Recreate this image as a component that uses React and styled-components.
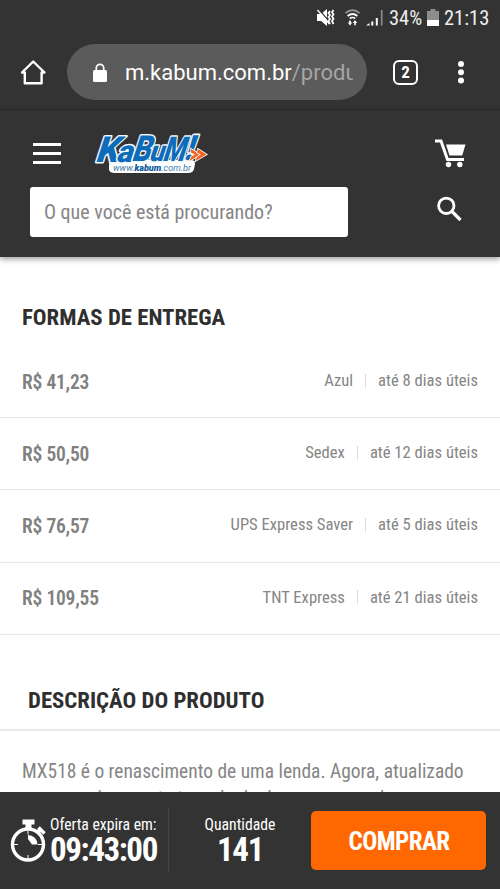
import React from 'react'
import styled, { createGlobalStyle } from 'styled-components'

const condensed = "'Roboto Condensed', Roboto, sans-serif"

const GlobalStyle = createGlobalStyle`
  * {
    box-sizing: border-box;
  }
  body {
    margin: 0;
    background: #fff;
    font-family: ${condensed};
    overflow: hidden;
  }
  svg {
    flex: none;
  }
`

const Screen = styled.div`
  display: flex;
  flex-direction: column;
  width: 500px;
  height: 889px;
  overflow: hidden;
`

const StatusBar = styled.div`
  display: flex;
  justify-content: flex-end;
  align-items: center;
  height: 35px;
  padding-right: 10px;
  background: #333;
  color: #eee;
  font-size: 20.5px;
  flex: none;
`

const StatusText = styled.span`
  margin-left: ${p => p.gap}px;
  width: ${p => p.width}px;
  white-space: nowrap;
`

const Battery = styled.svg`
  margin-left: 5px;
`

const BrowserBar = styled.div`
  display: flex;
  align-items: center;
  height: 75px;
  padding: 0 27px 0 19px;
  background: #333;
  border-bottom: 1px solid #2c2c2c;
  flex: none;
`

const AddressPill = styled.div`
  display: flex;
  align-items: center;
  width: 300px;
  height: 56px;
  margin: 0 26px 0 20px;
  padding: 1px 14px 0 25px;
  border-radius: 28px;
  background: #5b5b5b;
`

const Address = styled.div`
  width: 228px;
  margin-left: 17px;
  overflow: hidden;
  white-space: nowrap;
  color: #fff;
  font-family: Roboto, sans-serif;
  font-size: 22px;
  line-height: 30px;
`

const AddressPath = styled.span`
  color: #a5a5a5;
`

const TabCount = styled.div`
  display: flex;
  align-items: center;
  justify-content: center;
  width: 25px;
  height: 25px;
  margin-right: 39px;
  border: 2.5px solid #fff;
  border-radius: 6px;
  color: #fff;
  font-size: 17px;
  font-weight: 700;
  line-height: 20px;
`

const SiteHeader = styled.header`
  height: 147px;
  padding: 20px 34px 0 30px;
  background: #333;
  box-shadow: 0 2px 6px rgba(0, 0, 0, 0.4);
  flex: none;
`

const HeaderRow = styled.div`
  display: flex;
  align-items: center;
  justify-content: space-between;
  height: ${p => p.height}px;
`

const Brand = styled.div`
  display: flex;
  align-items: center;
  gap: 29px;
  padding-left: 3px;
`

const MenuButton = styled.div`
  display: flex;
  flex-direction: column;
  justify-content: space-between;
  width: 28px;
  height: 21px;
`

const MenuLine = styled.span`
  height: 3px;
  background: #fff;
`

const SearchField = styled.div`
  width: 318px;
  height: 50px;
  padding-left: 14px;
  border-radius: 3px;
  background: #fff;
  color: #858585;
  font-size: 20px;
  line-height: 50px;
`

const SearchButton = styled.div`
  display: flex;
  padding: 0 4px 7px 0;
`

const Content = styled.main`
  flex: 1;
  overflow: hidden;
  padding-top: 45px;
`

const Title = styled.h2`
  margin: 0;
  padding-left: ${p => p.indent}px;
  color: #2f2f2f;
  font-size: 22.8px;
  font-weight: 700;
  line-height: 32px;
`

const ShippingList = styled.ul`
  margin: 12px 0 0;
  padding: 0;
  list-style: none;
`

const ShippingItem = styled.li`
  display: flex;
  align-items: center;
  justify-content: space-between;
  height: 72.2px;
  padding: 0 22px;
  border-bottom: 1.5px solid #e8e8e8;
`

const Price = styled.span`
  padding-top: 1px;
  color: #808080;
  font-size: 19.5px;
  font-weight: 600;
  letter-spacing: -0.2px;
`

const Delivery = styled.span`
  display: flex;
  align-items: center;
  padding-bottom: 2px;
  color: #858585;
  font-size: 16.6px;
`

const Separator = styled.span`
  width: 1px;
  height: 14px;
  margin: 0 12px;
  background: #ddd;
`

const DescriptionHead = styled.div`
  margin-top: 50px;
  padding-bottom: 12px;
  border-bottom: 2px solid #e8e8e8;
`

const Description = styled.p`
  margin: 27px 0 0;
  padding: 0 22px;
  color: #858585;
  font-size: 19.45px;
  line-height: 27px;
  white-space: nowrap;
`

const BuyBar = styled.footer`
  display: flex;
  align-items: center;
  height: 97px;
  padding: 0 14px 0 10px;
  background: #333;
  color: #fff;
  flex: none;
`

const Info = styled.div`
  display: flex;
  flex-direction: column;
  align-items: ${p => (p.center ? 'center' : 'flex-start')};
  width: ${p => p.width}px;
  margin-left: ${p => p.gap || 0}px;
  padding-bottom: 3px;
`

const InfoLabel = styled.span`
  font-size: 15.7px;
  line-height: 20px;
  white-space: nowrap;
`

const InfoValue = styled.span`
  font-size: 33px;
  font-weight: 700;
  letter-spacing: -1.4px;
  line-height: 29px;
`

const Divider = styled.div`
  width: 1px;
  height: 65px;
  background: #474747;
`

const BuyButton = styled.button`
  width: 175px;
  height: 59px;
  margin-left: auto;
  padding: 1px 0 0 1px;
  border: 0;
  border-radius: 5px;
  background: #ff6700;
  color: #fff;
  font-family: ${condensed};
  font-size: 25px;
  font-weight: 700;
  letter-spacing: -0.6px;
`

const shipping = [
  { price: 'R$ 41,23', carrier: 'Azul', time: 'até 8 dias úteis' },
  { price: 'R$ 50,50', carrier: 'Sedex', time: 'até 12 dias úteis' },
  { price: 'R$ 76,57', carrier: 'UPS Express Saver', time: 'até 5 dias úteis' },
  { price: 'R$ 109,55', carrier: 'TNT Express', time: 'até 21 dias úteis' },
]

const StatusIcons = () => (
  <svg width="68" height="20" viewBox="316 8 68 20" fill="#fff">
    <path d="M317 14h4l6-5v17l-6-5h-4z" />
    <path d="M318.500 9l12 14" stroke="#333" strokeWidth="1.200" />
    <path d="M317.500 10l12 14" stroke="#fff" strokeWidth="1.400" />
    <path
      d="M330 11l-1.500 2 1.500 2-1.500 2 1.500 2-1.500 2 1.500 3M333.500 10l-1.500 2.200 1.500 2.200-1.500 2.200 1.500 2.200-1.500 2.200 1.500 3"
      fill="none"
      stroke="#fff"
      strokeWidth="1.800"
    />
    <g fill="none" strokeWidth="1.700">
      <path d="M345.500 13.200q7-6 14 0" stroke="#999" />
      <path d="M347.600 16q4.900-4 9.800 0M349.800 18.500q2.700-2 5.400 0" stroke="#fff" />
    </g>
    <path d="M350 25.500l-2.200-3h1.400v-2h1.600v2h1.400zM355 20l2.200 3h-1.400v2.300h-1.600V23h-1.400z" />
    <path d="M366 25.500l3.500-2.500v2.500zM371.300 21.500h2v4h-2zM375.800 18h2v7.500h-2z" />
    <path d="M380.800 10h1.800v15.500h-1.800z" fill="#888" />
  </svg>
)

const BatteryIcon = () => (
  <Battery width="12" height="17" viewBox="0 0 12 17">
    <path d="M3.500 0h5v2H12v9H0V2h3.500z" fill="#8c8c8c" />
    <path d="M0 11h12v6H0z" fill="#fff" />
  </Battery>
)

const HomeIcon = () => (
  <svg width="28" height="28" viewBox="0 0 28 28" fill="none">
    <path
      d="M3 14.500L14.200 3.500l11.300 11H22.600V25.200H5.800V14.500z"
      stroke="#fff"
      strokeWidth="2.400"
      strokeLinejoin="round"
    />
  </svg>
)

const LockIcon = () => (
  <svg width="16" height="20" viewBox="0 0 16 20">
    <rect x="1" y="7" width="14" height="12" rx="1.500" fill="#fff" />
    <path d="M4.300 8V5a3.700 3.700 0 0 1 7.400 0v3" fill="none" stroke="#fff" strokeWidth="1.700" />
  </svg>
)

const MoreIcon = () => (
  <svg width="8" height="24" viewBox="0 0 8 24" fill="#fff">
    <circle cx="4" cy="4" r="3" />
    <circle cx="4" cy="12.300" r="3" />
    <circle cx="4" cy="20.600" r="3" />
  </svg>
)

const LogoSvg = styled.svg`
  overflow: visible;
  font-family: Roboto, sans-serif;
`

const Logo = () => (
  <LogoSvg width="118" height="44" viewBox="92 131 118 44">
    <path d="M117 160h76q4 0 4 4l-1 5q-1 4-6 4h-73q-6 0-6-4v-4q0-5 6-5z" fill="#fff" />
    <g
      transform="translate(96.500 161.500) skewX(-18)"
      fontWeight="900"
      fill="#0c6cb9"
      stroke="#f2f8fc"
      strokeWidth="3"
      strokeLinejoin="round"
      paintOrder="stroke"
    >
      <text x="0" y="0" fontSize="36" textLength="23" lengthAdjust="spacingAndGlyphs">K</text>
      <text x="21" y="0" fontSize="31" textLength="16" lengthAdjust="spacingAndGlyphs">a</text>
      <text x="36" y="-1" fontSize="36" textLength="19" lengthAdjust="spacingAndGlyphs">B</text>
      <text x="53.500" y="-1" fontSize="29" textLength="15" lengthAdjust="spacingAndGlyphs">u</text>
      <text x="67" y="-1" fontSize="34" textLength="22" lengthAdjust="spacingAndGlyphs">M</text>
      <text x="88" y="-2" fontSize="35" textLength="9" lengthAdjust="spacingAndGlyphs">!</text>
    </g>
    <g fill="#f4601f" stroke="#fff" strokeWidth="1.600" paintOrder="stroke">
      <path d="M193 149l9 5.500-10.500 6.500 1.500-4 4-2.500-4-2z" />
      <path d="M200 149l8.500 5.500-11 6.500 1.500-4 4-2.500-4-2z" />
    </g>
    <text
      x="115"
      y="170.500"
      fontSize="9.500"
      fontStyle="italic"
      textLength="78"
      lengthAdjust="spacingAndGlyphs"
      fill="#4179a8"
    >
      www.<tspan fontWeight="900" fill="#0b5a9c">kabum</tspan>.com.br
    </text>
  </LogoSvg>
)

const CartIcon = () => (
  <svg width="31" height="29" viewBox="0 0 31 29">
    <path d="M0 2h6l6.500 18.500h16.500" fill="none" stroke="#fff" strokeWidth="3" />
    <path d="M11 5.500h19.500l-3.300 11H14.500z" fill="#fff" />
    <circle cx="13.500" cy="25.500" r="2.700" fill="#fff" />
    <circle cx="24.800" cy="25.500" r="2.700" fill="#fff" />
  </svg>
)

const SearchIcon = () => (
  <svg width="25" height="26" viewBox="0 0 25 26" fill="none" stroke="#fff">
    <circle cx="9.300" cy="9.800" r="7.700" strokeWidth="2.800" />
    <path d="M15 15.500l8.500 8.500" strokeWidth="3.200" />
  </svg>
)

const StopwatchIcon = () => (
  <svg width="36" height="43" viewBox="0 0 36 43" fill="none" stroke="#fff">
    <circle cx="18" cy="25.500" r="15.500" strokeWidth="3.400" />
    <path d="M12.500 3h12" strokeWidth="5" />
    <path d="M18.500 5v5" strokeWidth="6" />
    <path d="M27.500 13.500l4-4" strokeWidth="4" />
    <path d="M28.500 8.500l6 6" strokeWidth="3.500" />
    <path d="M18 12v3.500M18 36v3.500M4 25.500h4M28 25.500h4" strokeWidth="1" />
    <path d="M18 16a9.500 9.500 0 0 1 9.500 9.500h-5.500L18 20z" fill="#fff" stroke="none" />
  </svg>
)

export default function App() {
  return (
    <Screen>
      <GlobalStyle />
      <StatusBar>
        <StatusIcons />
        <StatusText gap={5} width={33}>34%</StatusText>
        <BatteryIcon />
        <StatusText gap={5} width={46}>21:13</StatusText>
      </StatusBar>
      <BrowserBar>
        <HomeIcon />
        <AddressPill>
          <LockIcon />
          <Address>
            m.kabum.com.br<AddressPath>/produ</AddressPath>
          </Address>
        </AddressPill>
        <TabCount>2</TabCount>
        <MoreIcon />
      </BrowserBar>
      <SiteHeader>
        <HeaderRow height={46}>
          <Brand>
            <MenuButton>
              <MenuLine />
              <MenuLine />
              <MenuLine />
            </MenuButton>
            <Logo />
          </Brand>
          <CartIcon />
        </HeaderRow>
        <HeaderRow height={72}>
          <SearchField>O que você está procurando?</SearchField>
          <SearchButton>
            <SearchIcon />
          </SearchButton>
        </HeaderRow>
      </SiteHeader>
      <Content>
        <Title indent={22}>FORMAS DE ENTREGA</Title>
        <ShippingList>
          {shipping.map(item => (
            <ShippingItem key={item.carrier}>
              <Price>{item.price}</Price>
              <Delivery>
                {item.carrier}
                <Separator />
                {item.time}
              </Delivery>
            </ShippingItem>
          ))}
        </ShippingList>
        <DescriptionHead>
          <Title indent={28}>DESCRIÇÃO DO PRODUTO</Title>
        </DescriptionHead>
        <Description>
          MX518 é o renascimento de uma lenda. Agora, atualizado
          <br />
          com a mais recente tecnologia de sensor para jogos
        </Description>
      </Content>
      <BuyBar>
        <StopwatchIcon />
        <Info width={118} gap={4}>
          <InfoLabel>Oferta expira em:</InfoLabel>
          <InfoValue>09:43:00</InfoValue>
        </Info>
        <Divider />
        <Info width={142} center>
          <InfoLabel>Quantidade</InfoLabel>
          <InfoValue>141</InfoValue>
        </Info>
        <BuyButton>COMPRAR</BuyButton>
      </BuyBar>
    </Screen>
  )
}
